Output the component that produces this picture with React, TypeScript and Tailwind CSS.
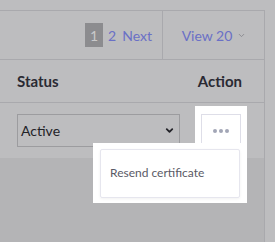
import { ChevronDown } from "lucide-react";

export default function App() {
  return (
    <div
      className="w-[275px] h-[242px] overflow-hidden bg-[#bdbdbf] pt-[10px] flex flex-col"
      style={{ fontFamily: "Lato, 'Open Sans', sans-serif" }}
    >
      <div className="w-[265px] flex-1 flex flex-col border-t border-r border-[#a9a9ad]">
        {/* Toolbar: pagination + page size */}
        <div className="h-[49px] flex justify-end border-b border-[#a9a9ad]">
          <div className="flex items-center pr-[10px] text-[14px] text-[#6a70c6]">
            <span className="w-[18px] h-[24px] flex items-center justify-center bg-[#8c8c8f] text-[#c9c9cb]">
              1
            </span>
            <span className="ml-[5px]">2</span>
            <span className="ml-[6px]">Next</span>
          </div>
          <div className="w-[102px] border-l border-[#a9a9ad] flex items-center justify-center gap-[5px] pl-[1px] text-[14px] text-[#6a70c6]">
            <span>View 20</span>
            <ChevronDown className="w-[9px] h-[9px] text-[#8a8a90]" strokeWidth={2.5} />
          </div>
        </div>

        {/* Header */}
        <div className="h-[43px] flex items-center justify-between pl-[17px] pr-[22px] border-b border-[#a9a9ad] text-[15px] font-bold text-[#2a2a33]">
          <span>Status</span>
          <span>Action</span>
        </div>

        {/* Row */}
        <div className="h-[55px] flex items-center justify-between pl-[17px] pr-[23px]">
          <div className="w-[163px] h-[33px] border border-[#9c9c9f] flex items-center justify-between pl-[3px] pr-[4px] text-[14px] text-[#222228]">
            <span>Active</span>
            <ChevronDown className="w-[11px] h-[11px] text-[#222228]" strokeWidth={4} />
          </div>

          <div className="relative w-[40px] h-[33px]">
            {/* spotlight around the button */}
            <div className="absolute -left-[6px] -top-[8px] w-[52px] h-[45px] bg-white" />
            <button className="relative z-10 w-full h-full bg-white border border-[#dedee8] flex items-center justify-center gap-[2px]">
              <span className="w-[4px] h-[4px] rounded-full bg-[#a2a6b6]" />
              <span className="w-[4px] h-[4px] rounded-full bg-[#a2a6b6]" />
              <span className="w-[4px] h-[4px] rounded-full bg-[#a2a6b6]" />
            </button>

            {/* dropdown menu with its spotlight */}
            <div className="absolute z-20 -left-[108px] top-[29px] w-[154px] h-[60px] bg-white pl-[7px] pt-[6px] pr-[7px] pb-[5px]">
              <div className="h-full border border-[#e6e6ee] rounded-[2px] shadow-[0_1px_3px_rgba(0,0,0,0.06)] flex items-center pl-[9px] pb-[1px] text-[12px] text-[#5a5a66]">
                Resend certificate
              </div>
            </div>
          </div>
        </div>

        {/* below the table */}
        <div className="flex-1 bg-[#b4b4b6]" />
      </div>
    </div>
  );
}
